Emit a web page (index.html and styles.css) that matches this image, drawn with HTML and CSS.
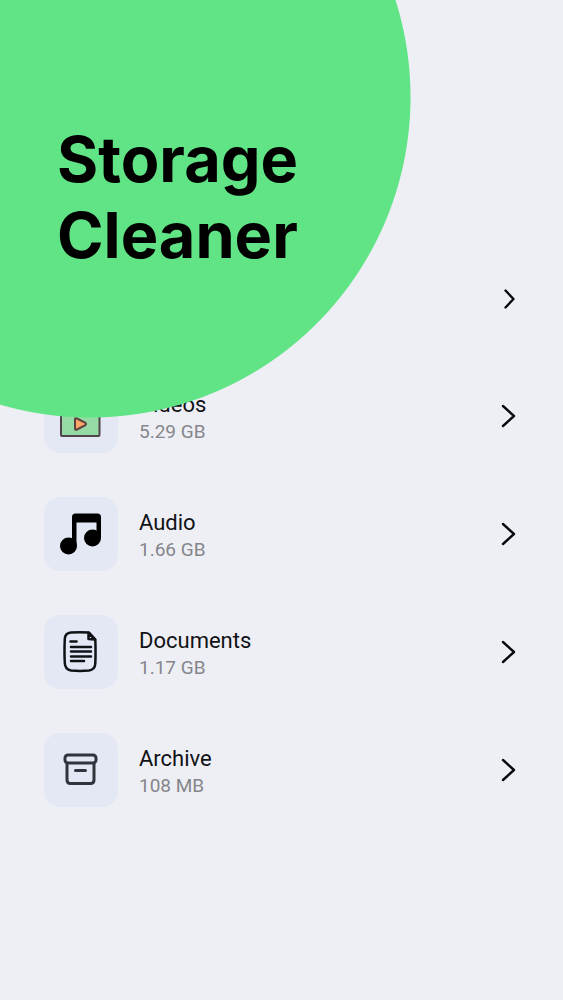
FILE: index.html
```html
<!DOCTYPE html>
<html lang="en">
<head>
<meta charset="utf-8">
<meta name="viewport" content="width=device-width, initial-scale=1">
<title>Storage Cleaner</title>
<link rel="stylesheet" href="styles.css">
</head>
<body>
<div class="circle"></div>
<header class="header">
  <h1 class="title">Storage<br>Cleaner</h1>
</header>
<main class="content">
  <ul class="list">
    <li><button class="row" type="button">
      <span class="tile"></span>
      <span class="info"></span>
      <svg class="chevron" viewBox="0 0 16 24"><path d="M5.500 4.500 13.500 13 5.500 21.500"/></svg>
    </button></li>
    <li><button class="row" type="button">
      <span class="tile"><svg class="icon" viewBox="0 0 42 42"><rect x="1" y="3" width="38.500" height="38" rx="1" fill="#96dba5" stroke="#51454b" stroke-width="2"/><path d="M15 24.500v9q0 2 2 1l8-4q2-1.500 0-3l-8-4q-2-1-2 1z" fill="#ffa568" stroke="#5c413d" stroke-width="2"/></svg></span>
      <span class="info"><span class="name">Videos</span><span class="size">5.29 GB</span></span>
      <svg class="chevron" viewBox="0 0 16 24"><path d="M3 2 14 12 3 22"/></svg>
    </button></li>
    <li><button class="row" type="button">
      <span class="tile"><svg class="icon" viewBox="0 0 42 42"><path d="M12 26V4q0-3.500 3.500-3.500h22q3.500 0 3.500 3.500v21h-4.500V9.500h-20v24H12z"/><circle cx="8.500" cy="33" r="8.500"/><circle cx="32.500" cy="25" r="8.500"/></svg></span>
      <span class="info"><span class="name">Audio</span><span class="size">1.66 GB</span></span>
      <svg class="chevron" viewBox="0 0 16 24"><path d="M3 2 14 12 3 22"/></svg>
    </button></li>
    <li><button class="row" type="button">
      <span class="tile"><svg class="icon" viewBox="0 0 42 42" fill="none" stroke="#101216" stroke-width="2.500" stroke-linecap="round" stroke-linejoin="round"><path d="M29 1.500Q20 1 11 1.500 5 2 4.800 8 4.200 20 4.800 32 5 38.500 11 39.500q9 .8 18 0 6-.8 6.300-7 .5-12 0-24z"/><path d="M28.500 2v6l6.500 .5L28.500 2z" fill="#e2e8f5"/><path d="M10.500 10.500h6"/><path d="M11 16h20M11 20.500h20M11 25.500h20M11 30h13"/></svg></span>
      <span class="info"><span class="name">Documents</span><span class="size">1.17 GB</span></span>
      <svg class="chevron" viewBox="0 0 16 24"><path d="M3 2 14 12 3 22"/></svg>
    </button></li>
    <li><button class="row" type="button">
      <span class="tile"><svg class="icon" viewBox="0 0 42 42" fill="none" stroke="#31343b" stroke-width="3" stroke-linecap="round" stroke-linejoin="round"><rect x="5" y="6" width="31" height="8" rx="3"/><path d="M7 14v17q0 3.500 3.500 3.500h20q3.500 0 3.500-3.500V14M15.500 21.500h10"/></svg></span>
      <span class="info"><span class="name">Archive</span><span class="size">108 MB</span></span>
      <svg class="chevron" viewBox="0 0 16 24"><path d="M3 2 14 12 3 22"/></svg>
    </button></li>
  </ul>
</main>
</body>
</html>
```
FILE: styles.css
```css
* {
  box-sizing: border-box;
}

body {
  margin: 0;
  min-height: 100vh;
  background: #eeeff5;
  color: #111216;
  font-family: Roboto, sans-serif;
  overflow-x: hidden;
}

.circle {
  position: absolute;
  z-index: 1;
  top: 0;
  left: 0;
  width: 412px;
  height: 419px;
  background: radial-gradient(circle at 90px 97px, #60e485 320px, transparent 321px);
  pointer-events: none;
}

.header {
  position: relative;
  z-index: 2;
  padding: 121px 57px 0;
}

.title {
  margin: 0;
  color: #000;
  font: 700 63px/76px Inter, sans-serif;
}

.content {
  padding: 0 44px;
}

.list {
  display: flex;
  flex-direction: column;
  gap: 44px;
  margin: 0;
  padding: 0;
  list-style: none;
}

.list li:first-child {
  margin-top: -12px;
}

.row {
  display: flex;
  align-items: center;
  width: 100%;
  padding: 0;
  border: 0;
  background: none;
  color: inherit;
  font: inherit;
  text-align: left;
  cursor: pointer;
}

.tile {
  display: flex;
  align-items: center;
  justify-content: center;
  width: 74px;
  height: 74px;
  border-radius: 16px;
  background: #e3e8f4;
}

.icon {
  width: 42px;
  height: 42px;
}

.info {
  display: flex;
  flex: 1;
  flex-direction: column;
  padding: 4px 0 0 21px;
}

.name {
  font-size: 22px;
  line-height: 28px;
}

.size {
  color: #85868b;
  font-size: 19px;
  line-height: 26px;
}

.chevron {
  width: 16px;
  height: 24px;
  margin-right: 3px;
  fill: none;
  stroke: #08090b;
  stroke-width: 2.4;
  stroke-linecap: round;
  stroke-linejoin: round;
}
```
